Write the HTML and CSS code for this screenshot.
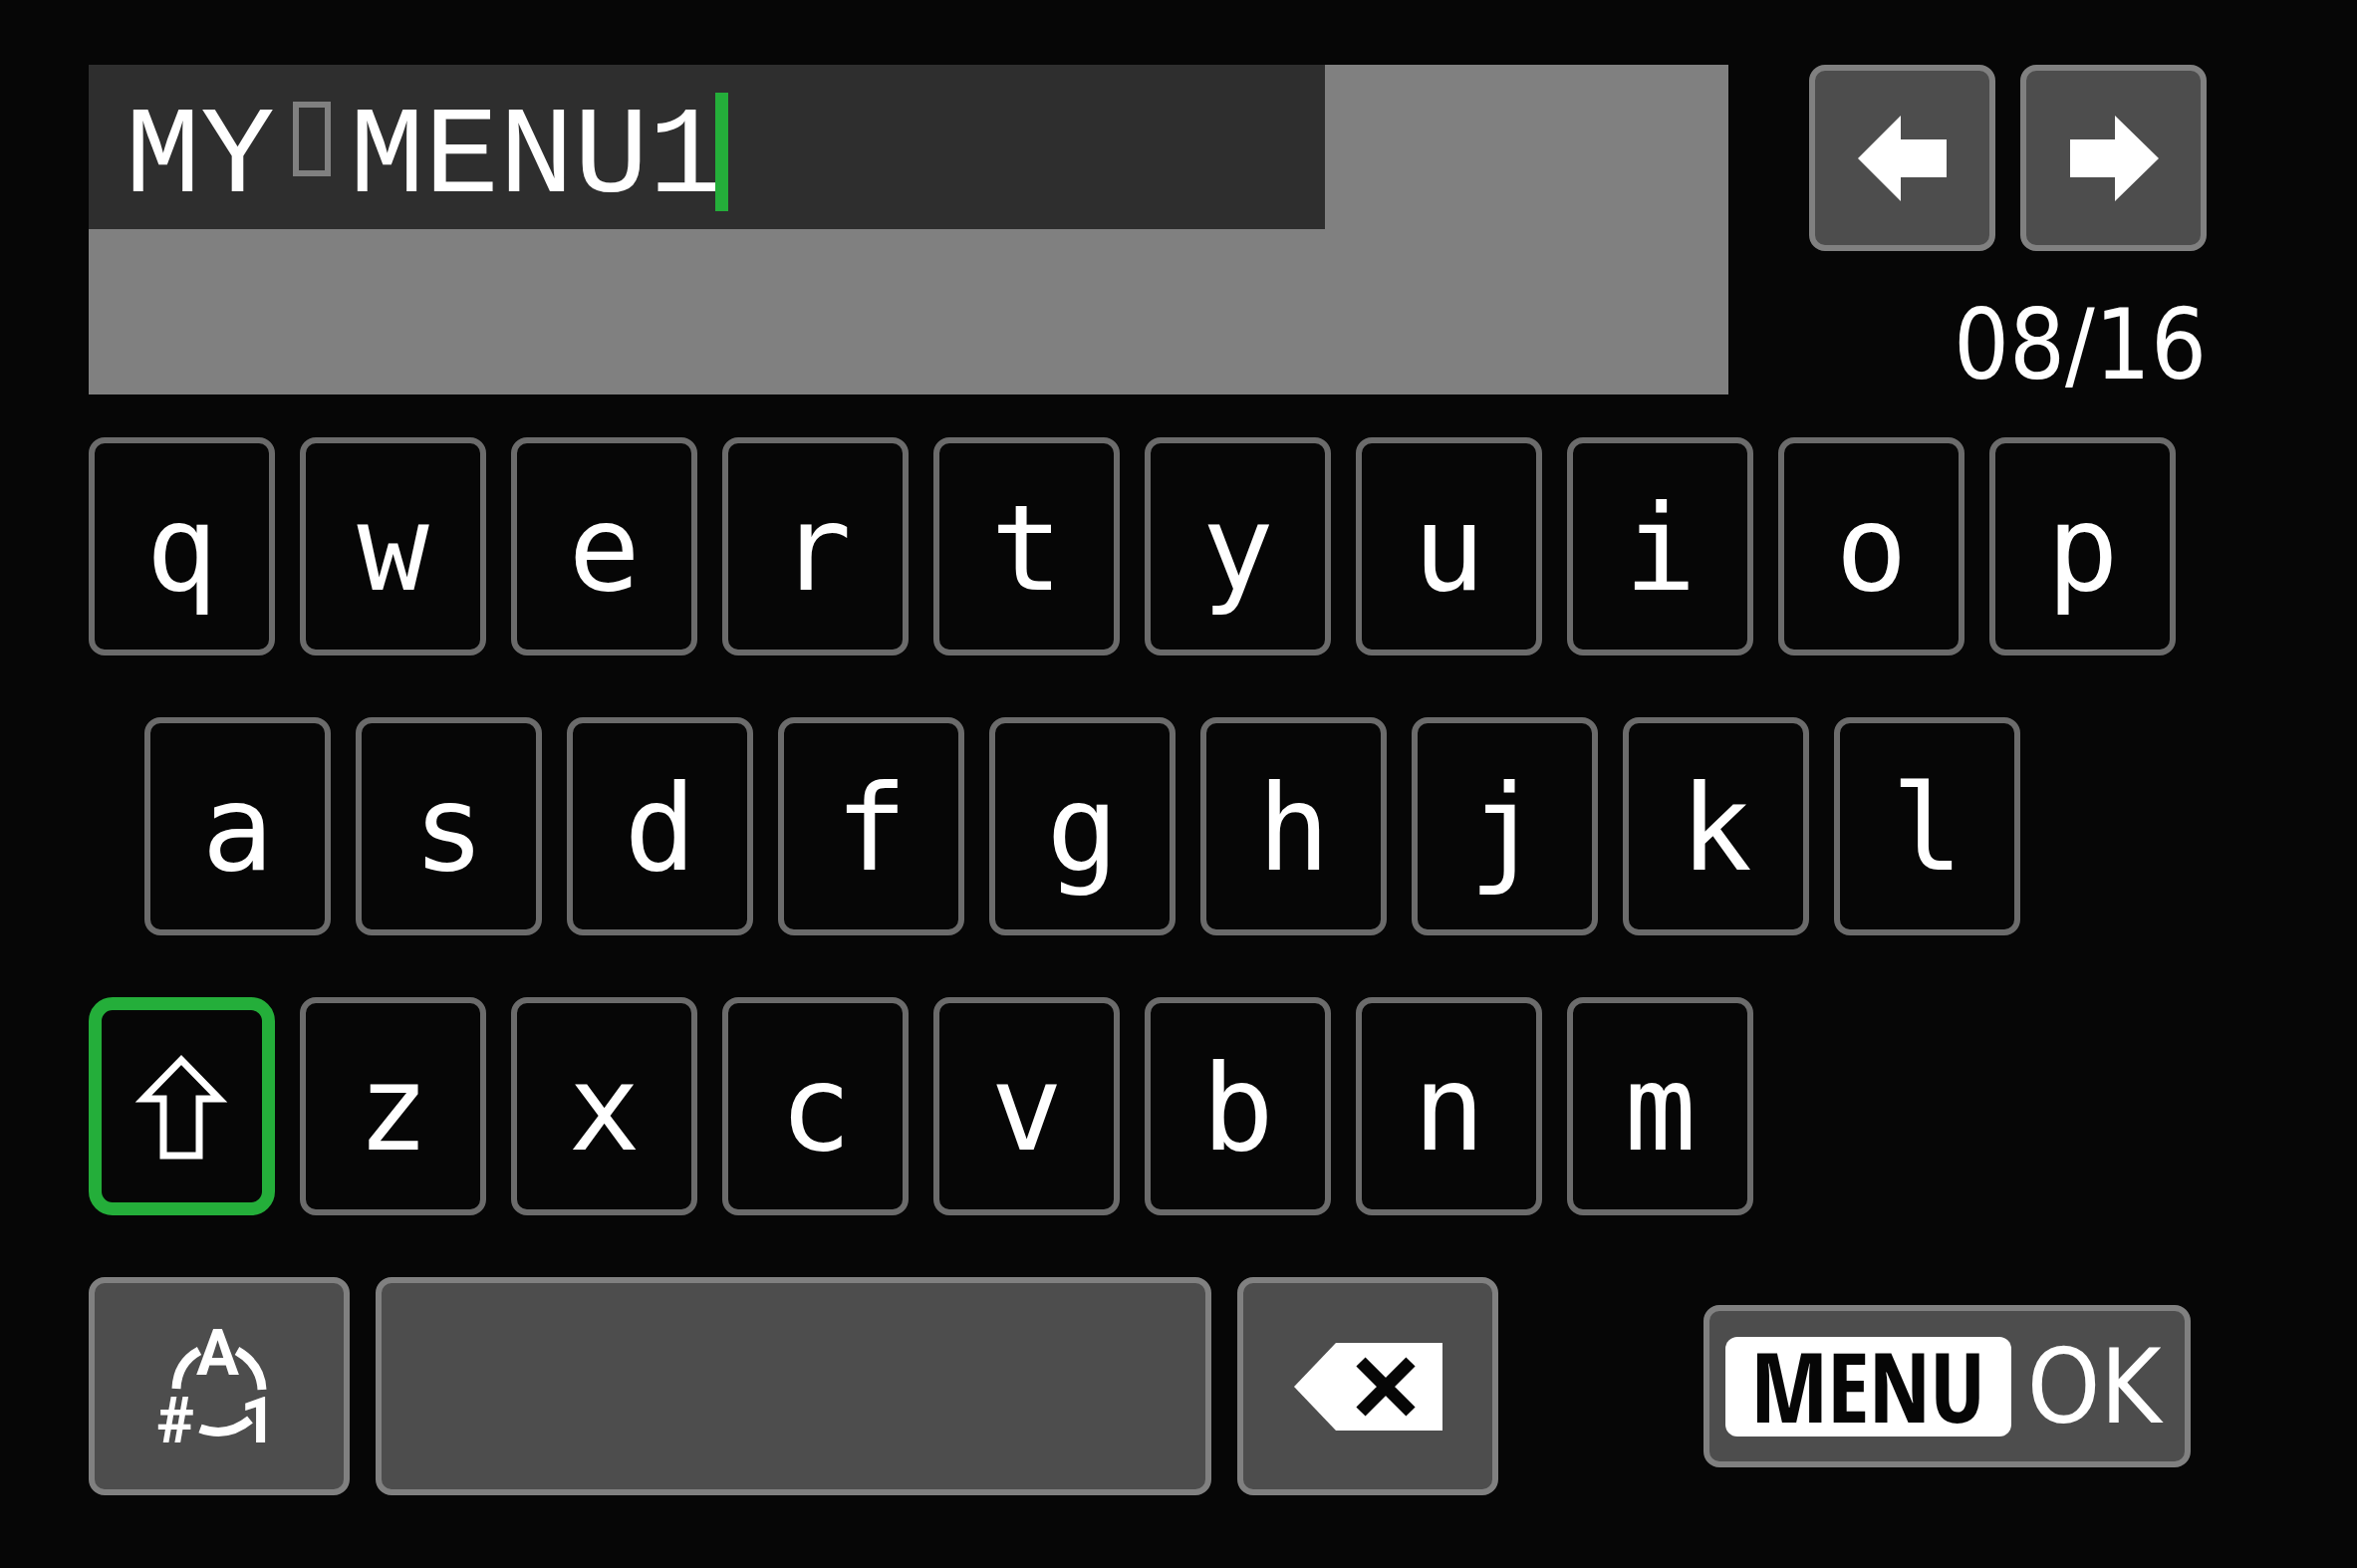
FILE: index.html
```html
<!DOCTYPE html>
<html lang="en">
<head>
    <meta charset="UTF-8">
    <meta name="viewport" content="width=device-width, initial-scale=1.0">
    <title>My Menu name</title>
    <link rel="stylesheet" href="styles.css">
</head>
<body>
    <main class="screen">
        <header class="top">
            <div class="entry">
                <input class="entry-input" type="text" aria-label="Menu name" maxlength="16" value="MY MENU1" spellcheck="false">
                <span class="space-mark"></span>
                <span class="caret"></span>
            </div>
            <div class="cursor-panel">
                <div class="cursor-buttons">
                    <button class="key tool" type="button" aria-label="Cursor left">
                        <svg width="90" height="86" viewBox="0 0 90 86"><path d="M0 43 43 0V24H89V62H43V86Z" fill="#fff"/></svg>
                    </button>
                    <button class="key tool" type="button" aria-label="Cursor right">
                        <svg width="90" height="86" viewBox="0 0 90 86"><path d="M90 43 46 0V24H1V62H46V86Z" fill="#fff"/></svg>
                    </button>
                </div>
                <p class="count">08/16</p>
            </div>
        </header>

        <div class="keyboard">
            <div class="row">
                <button class="key letter" type="button">q</button>
                <button class="key letter" type="button">w</button>
                <button class="key letter" type="button">e</button>
                <button class="key letter" type="button">r</button>
                <button class="key letter" type="button">t</button>
                <button class="key letter" type="button">y</button>
                <button class="key letter" type="button">u</button>
                <button class="key letter" type="button">i</button>
                <button class="key letter" type="button">o</button>
                <button class="key letter" type="button">p</button>
            </div>
            <div class="row row-home">
                <button class="key letter" type="button">a</button>
                <button class="key letter" type="button">s</button>
                <button class="key letter" type="button">d</button>
                <button class="key letter" type="button">f</button>
                <button class="key letter" type="button">g</button>
                <button class="key letter" type="button">h</button>
                <button class="key letter" type="button">j</button>
                <button class="key letter" type="button">k</button>
                <button class="key letter" type="button">l</button>
            </div>
            <div class="row">
                <button class="key selected" type="button" aria-label="Shift">
                    <svg width="96" height="108" viewBox="0 0 96 108"><path d="M47 7 85 46H65V103H29V46H9Z" fill="none" stroke="#fff" stroke-width="7"/></svg>
                </button>
                <button class="key letter" type="button">z</button>
                <button class="key letter" type="button">x</button>
                <button class="key letter" type="button">c</button>
                <button class="key letter" type="button">v</button>
                <button class="key letter" type="button">b</button>
                <button class="key letter" type="button">n</button>
                <button class="key letter" type="button">m</button>
            </div>
        </div>

        <div class="bottom">
            <button class="key tool" type="button" aria-label="Input mode">
                <svg class="mode-icon" width="140" height="124" viewBox="0 0 140 124">
                    <g fill="none" stroke="#fff" stroke-width="9">
                        <path d="M50 26Q28 38 27 64"/>
                        <path d="M88 26Q112 40 113 65"/>
                        <path d="M51 104Q78 114 101 95"/>
                    </g>
                    <text x="47" y="50">A</text>
                    <text x="7" y="118">#</text>
                    <text x="91" y="118">1</text>
                </svg>
            </button>
            <button class="key tool" type="button" aria-label="Space"></button>
            <button class="key tool" type="button" aria-label="Delete">
                <svg width="149" height="88" viewBox="0 0 149 88">
                    <path d="M0 44 42 0H149V88H42Z" fill="#fff"/>
                    <path d="M67 19 117 69M117 19 67 69" stroke="#060606" stroke-width="13"/>
                </svg>
            </button>
            <button class="key tool ok" type="button"><span class="badge">MENU</span>OK</button>
        </div>
    </main>
</body>
</html>
```

FILE: styles.css
```css
* {
    box-sizing: border-box;
    margin: 0;
    padding: 0;
}

body {
    background-color: #060606;
    color: #fff;
    font-family: "DejaVu Sans Condensed", "DejaVu Sans", sans-serif;
    min-height: 100vh;
}

.screen {
    padding: 65px 151px 73px 89px;
}

.top {
    display: flex;
    gap: 81px;
    margin-bottom: 43px;
}

.entry {
    position: relative;
    flex: 1;
    height: 331px;
    background-color: #808080;
}

.entry-input {
    display: block;
    width: 1241px;
    max-width: 100%;
    height: 165px;
    padding: 22px 37px 0;
    border: none;
    outline: none;
    background-color: #2e2e2e;
    color: #fff;
    font-family: "Liberation Mono", monospace;
    font-size: 125px;
    line-height: 143px;
}

/* marks the blank character */
.space-mark {
    position: absolute;
    left: 205px;
    top: 37px;
    width: 38px;
    height: 75px;
    border: 6px solid #808080;
}

.caret {
    position: absolute;
    left: 629px;
    top: 28px;
    width: 13px;
    height: 119px;
    background-color: #24ae3a;
}

.cursor-buttons {
    display: flex;
    gap: 25px;
}

.cursor-buttons .key {
    width: 187px;
    height: 187px;
}

.count {
    margin-top: 44px;
    font-size: 98px;
    line-height: 100px;
    text-align: right;
}

.keyboard {
    display: grid;
    gap: 62px;
    margin-right: 31px;
}

.row {
    display: grid;
    grid-template-columns: repeat(10, 1fr);
    gap: 25px;
}

.row-home {
    margin-left: 56px;
    margin-right: -56px;
}

.key {
    display: flex;
    align-items: center;
    justify-content: center;
    height: 219px;
    border: 6px solid #6b6b6b;
    border-radius: 16px;
    background-color: #060606;
    color: #fff;
    cursor: pointer;
}

.letter {
    padding-top: 4px;
    font-family: "DejaVu Sans Mono", monospace;
    font-size: 120px;
    line-height: 1;
}

.tool {
    border-color: #808080;
    background-color: #4d4d4d;
}

.selected {
    border: 13px solid #24ae3a;
    border-radius: 24px;
}

.bottom {
    display: grid;
    grid-template-columns: 262fr 840fr 262fr 669fr;
    align-items: center;
    gap: 26px;
    margin: 62px 16px 0 0;
}

.mode-icon {
    overflow: visible;
    fill: #fff;
    font-family: Roboto, sans-serif;
    font-size: 64px;
    font-weight: 700;
}

.ok {
    gap: 16px;
    height: 163px;
    margin-left: 180px;
    padding-right: 8px;
    font-family: "DejaVu Sans Condensed", "DejaVu Sans", sans-serif;
    font-size: 104px;
}

.badge {
    padding: 0 26px 4px;
    border-radius: 12px;
    background-color: #fff;
    color: #060606;
    font-family: "Open Sans Condensed", "Open Sans", sans-serif;
    font-size: 98px;
    font-weight: 700;
    line-height: 96px;
}
```
